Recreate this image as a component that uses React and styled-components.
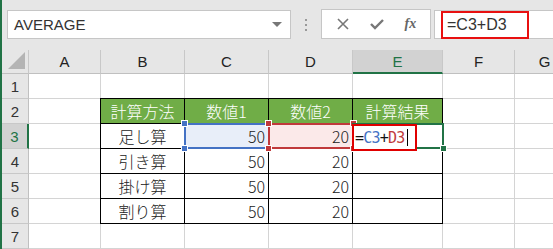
import styled, { createGlobalStyle } from "styled-components";

const GlobalStyle = createGlobalStyle`
  html, body { margin: 0; padding: 0; background: #ffffff; }
  body { font-family: "Noto Sans CJK JP", "Liberation Sans", sans-serif; }
`;

const COLS = [72, 84, 84, 84, 90, 72, 60];
const LETTERS = ["A", "B", "C", "D", "E", "F", "G"];
const ROW_H = 25;
const HEAD_W = 27;
const HEAD_H = 24;

const Window = styled.div`
  width: 553px;
  height: 249px;
  display: flex;
  overflow: hidden;
  border-left: 2px solid #217346;
  box-sizing: border-box;
`;

const Main = styled.div`
  flex: 1;
  display: flex;
  flex-direction: column;
  background: #e6e6e6;
  min-width: 0;
`;

// Barra de fórmulas ******************************************
const FormulaBar = styled.div`
  height: 50px;
  display: flex;
  align-items: flex-start;
  padding-top: 10px;
  box-sizing: border-box;
  padding-left: 5px;
`;

const NameBox = styled.div`
  width: 284px;
  height: 29px;
  box-sizing: border-box;
  background: #fff;
  border: 1px solid #c6c6c6;
  display: flex;
  align-items: center;
  justify-content: space-between;
  padding: 0 8px 0 6px;
  font-family: "Liberation Sans", sans-serif;
  font-size: 15px;
  color: #333;
`;

const Arrow = styled.div`
  width: 0;
  height: 0;
  border-left: 5px solid transparent;
  border-right: 5px solid transparent;
  border-top: 5px solid #777;
`;

const Dots = styled.div`
  width: 30px;
  height: 29px;
  display: flex;
  flex-direction: column;
  align-items: center;
  justify-content: center;
  gap: 3px;
  span {
    width: 2px;
    height: 2px;
    background: #999;
  }
`;

const ButtonBox = styled.div`
  width: 110px;
  height: 30px;
  margin-top: -1px;
  box-sizing: border-box;
  background: #fff;
  border: 1px solid #c6c6c6;
  display: flex;
  align-items: center;
  justify-content: space-around;
  padding: 0 4px;
  color: #777;
`;

const Fx = styled.span`
  font-family: "Liberation Serif", serif;
  font-style: italic;
  font-weight: bold;
  font-size: 14px;
  color: #666;
`;

const FormulaInput = styled.div`
  flex: 1;
  height: 29px;
  margin-left: 3px;
  box-sizing: border-box;
  background: #fff;
  border: 1px solid #c6c6c6;
  border-right: none;
  padding: 0 0 0 6px;
  display: flex;
  align-items: center;
`;

const RedMark = styled.div`
  width: 88px;
  height: 28px;
  box-sizing: border-box;
  border: 2px solid #e81010;
  display: flex;
  align-items: center;
  padding-left: 4px;
  font-family: "Liberation Sans", sans-serif;
  font-size: 16px;
  color: #333;
`;

// Planilha ***************************************************
const Sheet = styled.div`
  position: relative;
  flex: 1;
  display: grid;
  grid-template-columns: ${HEAD_W}px ${COLS.map((c) => c + "px").join(" ")};
  grid-template-rows: ${HEAD_H}px repeat(7, ${ROW_H}px);
  background: #fff;
`;

const Corner = styled.div`
  background: #e6e6e6;
  border-right: 1px solid #c8c8c8;
  border-bottom: 1px solid #c0c0c0;
  position: relative;
  &::after {
    content: "";
    position: absolute;
    right: 3px;
    bottom: 4px;
    width: 0;
    height: 0;
    border-left: 17px solid transparent;
    border-bottom: 17px solid #b4b4b4;
  }
`;

const ColHead = styled.div`
  background: ${(p) => (p.$active ? "#d2d2d2" : "#e6e6e6")};
  border-right: 1px solid #c8c8c8;
  border-bottom: ${(p) => (p.$active ? "2px solid #217346" : "1px solid #c0c0c0")};
  display: flex;
  align-items: center;
  justify-content: center;
  font-family: "Liberation Sans", sans-serif;
  font-size: 15px;
  color: ${(p) => (p.$active ? "#217346" : "#222")};
`;

const RowHead = styled.div`
  background: ${(p) => (p.$active ? "#d2d2d2" : "#e6e6e6")};
  border-right: ${(p) => (p.$active ? "2px solid #217346" : "1px solid #c0c0c0")};
  border-bottom: 1px solid #c8c8c8;
  display: flex;
  align-items: center;
  justify-content: center;
  font-family: "Liberation Sans", sans-serif;
  font-size: 15px;
  color: ${(p) => (p.$active ? "#217346" : "#333")};
`;

const Cell = styled.div`
  box-sizing: border-box;
  border-right: 1px solid ${(p) => (p.$table ? "#000" : "#d4d4d4")};
  border-bottom: 1px solid ${(p) => (p.$table ? "#000" : "#d4d4d4")};
  border-left: ${(p) => (p.$first ? "1px solid #000" : "none")};
  border-top: ${(p) => (p.$top ? "1px solid #000" : "none")};
  margin-left: ${(p) => (p.$first ? "-1px" : "0")};
  margin-top: ${(p) => (p.$top ? "-1px" : "0")};
  background: ${(p) => p.$bg || "#fff"};
  color: ${(p) => (p.$head ? "#fff" : "#222")};
  display: flex;
  align-items: center;
  justify-content: ${(p) => (p.$right ? "flex-end" : "center")};
  padding-right: ${(p) => (p.$right ? "3px" : "0")};
  font-size: 16px;
  font-weight: 300;
  white-space: nowrap;
  overflow: hidden;
`;

const Frame = styled.div`
  position: absolute;
  box-sizing: border-box;
  border: 2px solid ${(p) => p.$color};
  pointer-events: none;
`;

const Handle = styled.div`
  position: absolute;
  width: 5px;
  height: 5px;
  background: ${(p) => p.$color};
  border: 1px solid #fff;
`;

const EditBox = styled.div`
  position: absolute;
  box-sizing: border-box;
  background: #fff;
  border: 2px solid #e00000;
  display: flex;
  align-items: center;
  padding-left: 1px;
  font-family: "DejaVu Sans Mono", monospace;
  font-size: 15px;
  letter-spacing: -0.8px;
  color: #111;
`;

const Ref = styled.span`
  color: ${(p) => p.$color};
`;

const Caret = styled.span`
  display: inline-block;
  width: 1px;
  height: 17px;
  background: #000;
  margin-left: 3px;
`;

const rows = [
  null,
  ["計算方法", "数値1", "数値2", "計算結果"],
  ["足し算", "50", "20", ""],
  ["引き算", "50", "20", ""],
  ["掛け算", "50", "20", ""],
  ["割り算", "50", "20", ""],
  null,
];

const colX = (i) => HEAD_W + COLS.slice(0, i).reduce((a, b) => a + b, 0);
const rowY = (r) => HEAD_H + (r - 1) * ROW_H;

function renderCell(r, c) {
  const data = rows[r - 1];
  const inTable = data && c >= 1 && c <= 4;
  if (!inTable) {
    return <Cell key={`${r}-${c}`} />;
  }
  const v = data[c - 1];
  const head = r === 2;
  let bg = head ? "#70ad47" : "#fff";
  if (r === 3 && c === 2) bg = "#e8eef9";
  if (r === 3 && c === 3) bg = "#fbe9e9";
  return (
    <Cell
      key={`${r}-${c}`}
      $table
      $first={c === 1}
      $top={r === 2}
      $head={head}
      $bg={bg}
      $right={!head && c > 1}
    >
      {v}
    </Cell>
  );
}

function corners(x, y, w, h, color, only) {
  const pts = [
    [x, y],
    [x + w, y],
    [x, y + h],
    [x + w, y + h],
  ];
  return pts
    .filter((_, i) => !only || only.includes(i))
    .map(([px, py], i) => (
      <Handle
        key={color + i}
        $color={color}
        style={{ left: px - 3, top: py - 3 }}
      />
    ));
}

export default function App() {
  const cx = colX(2);
  const dx = colX(3);
  const ex = colX(4);
  const y3 = rowY(3);

  return (
    <>
      <GlobalStyle />
      <Window>
        <Main>
          <FormulaBar>
            <NameBox>
              AVERAGE
              <Arrow />
            </NameBox>
            <Dots>
              <span />
              <span />
              <span />
            </Dots>
            <ButtonBox>
              <svg width="14" height="14" viewBox="0 0 14 14">
                <path d="M2 2 L12 12 M12 2 L2 12" stroke="#777" strokeWidth="1.6" />
              </svg>
              <svg width="16" height="14" viewBox="0 0 16 14">
                <path d="M2 7 L6 11 L14 3" stroke="#777" strokeWidth="2.4" fill="none" />
              </svg>
              <Fx>fx</Fx>
            </ButtonBox>
            <FormulaInput>
              <RedMark>=C3+D3</RedMark>
            </FormulaInput>
          </FormulaBar>

          <Sheet>
            <Corner />
            {LETTERS.map((l) => (
              <ColHead key={l} $active={l === "E"}>
                {l}
              </ColHead>
            ))}
            {rows.map((_, ri) => {
              const r = ri + 1;
              return [
                <RowHead key={"h" + r} $active={r === 3}>
                  {r}
                </RowHead>,
                ...LETTERS.map((_, c) => renderCell(r, c)),
              ];
            })}

            <Frame $color="#4472c4" style={{ left: cx - 1, top: y3 - 1, width: COLS[2] + 2, height: ROW_H + 1 }} />
            {corners(cx - 1, y3 - 1, COLS[2] + 1, ROW_H, "#4472c4", [0, 2])}
            <Frame $color="#c0393b" style={{ left: dx - 1, top: y3 - 1, width: COLS[3] + 2, height: ROW_H + 1 }} />
            {corners(dx - 1, y3 - 1, COLS[3] + 1, ROW_H, "#c0393b")}
            <Frame $color="#217346" style={{ left: ex - 1, top: y3 - 1, width: COLS[4] + 2, height: ROW_H + 1 }} />
            {corners(ex - 1, y3 - 1, COLS[4] + 1, ROW_H, "#217346", [3])}

            <EditBox style={{ left: ex - 1, top: y3, width: 65, height: 27 }}>
              =<Ref $color="#4472c4">C3</Ref>+<Ref $color="#c0393b">D3</Ref>
              <Caret />
            </EditBox>
          </Sheet>
        </Main>
      </Window>
    </>
  );
}
